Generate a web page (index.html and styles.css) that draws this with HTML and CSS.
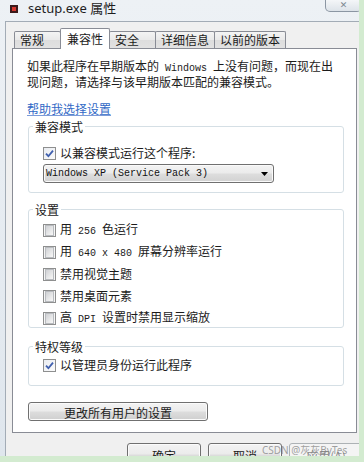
FILE: index.html
```html
<!DOCTYPE html>
<html lang="zh-CN">
<head>
<meta charset="utf-8">
<title>setup.exe 属性</title>
<link rel="stylesheet" href="styles.css">
</head>
<body>
<div class="window">
  <header class="titlebar">
    <svg class="app-icon" width="8" height="8" viewBox="0 0 8 8"><rect width="8" height="8" fill="#3b1a1a"/><rect x="2" y="2" width="4" height="4" fill="#d4372f"/></svg>
    <span class="title">setup.exe 属性</span>
    <span class="close">✕</span>
  </header>
  <div class="dialog">
    <nav class="tabs">
      <span class="tab">常规</span>
      <span class="tab active">兼容性</span>
      <span class="tab">安全</span>
      <span class="tab">详细信息</span>
      <span class="tab">以前的版本</span>
    </nav>
    <section class="panel">
      <p class="intro">如果此程序在早期版本的<span class="mono"> Windows </span>上没有问题，而现在出<br>现问题，请选择与该早期版本匹配的兼容模式。</p>
      <a class="help">帮助我选择设置</a>

      <fieldset class="group group-compat">
        <legend>兼容模式</legend>
        <div class="check-row"><span class="cb checked"><svg width="9" height="9" viewBox="0 0 9 9"><path d="M1 4.6 L3.4 7.2 L8 1.6" fill="none" stroke="#3f5fae" stroke-width="1.8"/></svg></span><span>以兼容模式运行这个程序:</span></div>
        <div class="select"><span class="mono">Windows XP (Service Pack 3)</span><svg width="7" height="4" viewBox="0 0 7 4"><path d="M0 0H7L3.5 4Z" fill="#000"/></svg></div>
      </fieldset>

      <fieldset class="group group-settings">
        <legend>设置</legend>
        <div class="rows">
          <div class="check-row"><span class="cb"></span><span>用<span class="mono"> 256 </span>色运行</span></div>
          <div class="check-row"><span class="cb"></span><span>用<span class="mono"> 640 x 480 </span>屏幕分辨率运行</span></div>
          <div class="check-row"><span class="cb"></span><span>禁用视觉主题</span></div>
          <div class="check-row"><span class="cb"></span><span>禁用桌面元素</span></div>
          <div class="check-row"><span class="cb"></span><span>高<span class="mono"> DPI </span>设置时禁用显示缩放</span></div>
        </div>
      </fieldset>

      <fieldset class="group group-priv">
        <legend>特权等级</legend>
        <div class="check-row"><span class="cb checked"><svg width="9" height="9" viewBox="0 0 9 9"><path d="M1 4.6 L3.4 7.2 L8 1.6" fill="none" stroke="#3f5fae" stroke-width="1.8"/></svg></span><span>以管理员身份运行此程序</span></div>
      </fieldset>

      <button class="btn btn-all" type="button">更改所有用户的设置</button>
    </section>
    <footer class="footer">
      <button class="btn btn-foot" type="button">确定</button>
      <button class="btn btn-foot" type="button">取消</button>
      <button class="btn btn-foot disabled" type="button">应用(A)</button>
      <span class="watermark">CSDN @灰灰ByTes</span>
    </footer>
  </div>
</div>
</body>
</html>
```
FILE: styles.css
```css
* { box-sizing: border-box; }
html, body { margin: 0; padding: 0; }
body {
  width: 364px;
  height: 462px;
  overflow: hidden;
  background: #d3ebd0;
  font: 12px/1 "Noto Sans CJK SC", "Noto Sans", sans-serif;
  color: #1b1b1b;
}
.window {
  width: 359px;
  height: 456px;
  overflow: hidden;
  display: flex;
  flex-direction: column;
  background: linear-gradient(180deg, #edf1f5 0, #dfe6ed 100%);
}
.titlebar {
  height: 21px;
  flex: none;
  display: flex;
  align-items: flex-start;
}
.app-icon { margin: 5px 0 0 10px; flex: none; }
.title {
  margin-left: 10px;
  font: 13px/17px "Noto Sans", "Noto Sans CJK SC", sans-serif;
  color: #1e1e1e;
}
.close {
  margin-left: auto;
  margin-right: -3px;
  width: 37px;
  height: 12px;
  border: 1px solid #8b96a3;
  border-top: 0;
  border-radius: 0 0 5px 5px;
  background: linear-gradient(#f4f6f8, #dde3e9);
  font: 9px/10px "DejaVu Sans", sans-serif;
  color: #7d8791;
  text-align: center;
}
.dialog {
  flex: 1;
  min-height: 0;
  margin-left: 5px;
  border-left: 1px solid #a3acb6;
  border-top: 1px solid #a3acb6;
  background: #f0f0f0;
  padding: 6px 1px 0 6px;
  display: flex;
  flex-direction: column;
}
.tabs {
  flex: none;
  height: 20px;
  display: flex;
  align-items: flex-end;
  padding-left: 2px;
  position: relative;
  z-index: 1;
}
.tab {
  height: 17px;
  min-width: 47px;
  padding: 0 5px;
  border: 1px solid #898c95;
  border-bottom: 0;
  border-radius: 2px 2px 0 0;
  line-height: 15px;
  background: linear-gradient(#f4f4f4 0, #e9e9e9 50%, #dddddd 52%, #e2e2e2 100%);
  color: #1b1b1b;
  white-space: nowrap;
}
.tab + .tab { margin-left: -1px; }
.tab.active {
  height: 21px;
  margin-bottom: -1px;
  padding: 2px 6px 0;
  background: #fff;
  position: relative;
  z-index: 2;
}
.panel {
  flex: none;
  height: 385px;
  margin-right: 1px;
  background: #fff;
  border: 1px solid #898c95;
  padding: 10px 12px 0 14px;
  display: flex;
  flex-direction: column;
  align-items: stretch;
}
.intro { margin: 0; line-height: 13px; white-space: nowrap; }
.mono {
  font-family: "Liberation Mono", monospace;
  font-size: 10px;
  white-space: pre;
}
.help {
  align-self: flex-start;
  margin-top: 15px;
  line-height: 12px;
  color: #3169c6;
  text-decoration: underline;
  text-decoration-color: #7c9bd8;
}
.group {
  margin: 5px 0 0 1px;
  padding: 12px 10px 9px 14px;
  border: 1px solid #d5dfe5;
  border-radius: 3px;
  min-width: 0;
}
.group legend {
  padding: 0 2px;
  margin-left: -10px;
  line-height: 13px;
  font-size: 12px;
}
.group-settings { margin-top: 10px; padding-top: 6px; padding-bottom: 1px; }
.group-priv { margin-top: 12px; padding-top: 4px; padding-bottom: 12px; }
.rows { display: flex; flex-direction: column; gap: 6px; }
.check-row {
  height: 16px;
  display: flex;
  align-items: center;
  gap: 4px;
  white-space: nowrap;
}
.cb {
  flex: none;
  width: 13px;
  height: 13px;
  border: 1px solid #8e8f8f;
  background: #f6f6f6;
  padding: 1px;
  display: flex;
  align-items: center;
  justify-content: center;
}
.cb::before {
  content: "";
  display: block;
  width: 9px;
  height: 9px;
  border: 1px solid #b8bbbf;
  background: linear-gradient(135deg, #cfd1d4 0, #e6e7e8 55%, #f7f7f7 100%);
}
.cb.checked::before { display: none; }
.cb.checked { background: linear-gradient(135deg, #e9ecf1, #fbfbfb); }
.select {
  margin-top: 3px;
  width: 231px;
  height: 19px;
  border: 1px solid #707070;
  border-radius: 3px;
  background: linear-gradient(#f3f3f3 0, #ebebeb 48%, #dddddd 52%, #d2d2d2 100%);
  box-shadow: inset 0 0 0 1px #fafafa;
  display: flex;
  align-items: center;
  justify-content: space-between;
  padding: 0 5px 0 2px;
  color: #111;
}
.btn {
  font: 12px/12px "Noto Sans CJK SC", "Noto Sans", sans-serif;
  color: #1b1b1b;
  border: 1px solid #707070;
  border-radius: 3px;
  background: linear-gradient(#f3f3f3 0, #ebebeb 48%, #dddddd 52%, #cfcfcf 100%);
  box-shadow: inset 0 0 0 1px #fbfbfb;
  text-align: center;
  margin: 0;
}
.btn-all {
  margin: 16px 0 0 1px;
  width: 180px;
  height: 19px;
  padding: 2px 0 0;
  align-self: flex-start;
}
.footer {
  flex: none;
  position: relative;
  display: flex;
  gap: 7px;
  padding: 10px 0 0 115px;
}
.btn-foot {
  flex: none;
  width: 74px;
  height: 23px;
  padding: 3px 0 0;
}
.btn-foot.disabled {
  border-color: #adb2b5;
  background: #f4f4f4;
  box-shadow: none;
  color: #8a8a8a;
}
.watermark {
  position: absolute;
  left: 250px;
  top: 12px;
  font: 10px/11px "Noto Sans", "Noto Sans CJK SC", sans-serif;
  color: rgba(130, 130, 130, 0.75);
  white-space: nowrap;
}
```
